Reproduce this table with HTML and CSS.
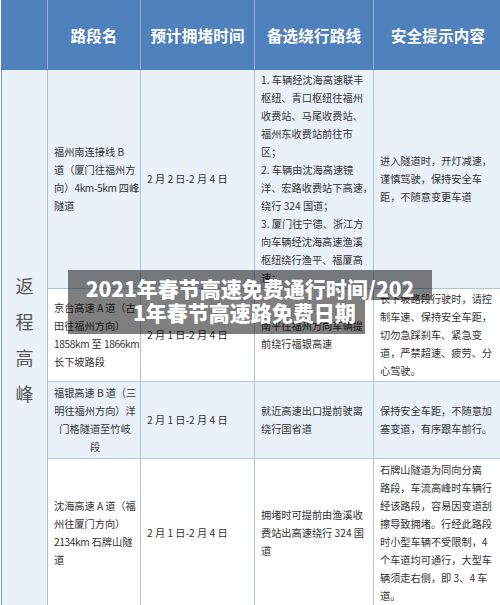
FILE: index.html
```html
<!DOCTYPE html>
<html lang="zh">
<head>
<meta charset="utf-8">
<link rel="stylesheet" href="styles.css">
</head>
<body>
<div class="page">
  <table class="grid">
    <colgroup>
      <col class="c1"><col class="c2"><col class="c3"><col class="c4"><col class="c5">
    </colgroup>
    <thead>
      <tr class="head">
        <th></th>
        <th>路段名</th>
        <th>预计拥堵时间</th>
        <th>备选绕行路线</th>
        <th>安全提示内容</th>
      </tr>
    </thead>
    <tbody>
      <tr class="r1 alt">
        <td class="side" rowspan="4">返<br>程<br>高<br>峰</td>
        <td>福州南连接线 <span class="lat">B</span><br>道（厦门往福州方<br>向）<span class="lat">4km-5km</span> 四峰<br>隧道</td>
        <td>2 月 2 日-2 月 4 日</td>
        <td>1. 车辆经沈海高速联丰<br>枢纽、青口枢纽往福州<br>收费站、马尾收费站、<br>福州东收费站前往市<br>区；<br>2. 车辆由沈海高速镜<br>洋、宏路收费站下高速，<br>绕行 324 国道；<br>3. 厦门往宁德、浙江方<br>向车辆经沈海高速渔溪<br>枢纽绕行渔平、福厦高<br>速；</td>
        <td>进入隧道时，开灯减速，<br>谨慎驾驶，保持安全车<br>距，不随意变更车道</td>
      </tr>
      <tr class="r2">
        <td>京台高速 <span class="lat">A</span> 道（古<br>田往福州方向）<br><span class="lat">1858km</span> 至 <span class="lat">1866km</span><br>长下坡路段</td>
        <td>2 月 1 日-2 月 4 日</td>
        <td>南平往福州方向车辆提<br>前绕行福银高速</td>
        <td>长下坡路段行驶时，请控<br>制车速、保持安全车距，<br>切勿急踩刹车、紧急变<br>道，严禁超速、疲劳、分<br>心驾驶。</td>
      </tr>
      <tr class="r3 alt">
        <td class="center">福银高速 <span class="lat">B</span> 道（三<br>明往福州方向）洋<br>门格隧道至竹岐<br>段</td>
        <td>2 月 1 日-2 月 4 日</td>
        <td>就近高速出口提前驶离<br>绕行国省道</td>
        <td>保持安全车距，不随意加<br>塞变道，有序跟车前行。</td>
      </tr>
      <tr class="r4">
        <td>沈海高速 <span class="lat">A</span> 道（福<br>州往厦门方向）<br><span class="lat">2134km</span> 石牌山隧<br>道</td>
        <td>2 月 1 日-2 月 4 日</td>
        <td>拥堵时可提前由渔溪收<br>费站出高速绕行 324 国<br>道</td>
        <td>石牌山隧道为同向分离<br>路段，车流高峰时车辆行<br>经该路段，容易因变道刮<br>擦导致拥堵。行经此路段<br>时小型车辆不受限制，4<br>个车道均可通行，大型车<br>辆须走右侧，即 3、4 车<br>道。</td>
      </tr>
    </tbody>
  </table>
  <div class="caption">
    <div class="cap-line first">2021年春节高速免费通行时间/202</div>
    <div class="cap-line second">1年春节高速路免费日期</div>
  </div>
</div>
</body>
</html>
```
FILE: styles.css
```css
html, body {
  margin: 0;
  padding: 0;
  background: #ffffff;
}
body {
  width: 500px;
  height: 605px;
  overflow: hidden;
  font-family: "Noto Sans CJK SC", "Liberation Sans", sans-serif;
}
.page {
  position: relative;
  width: 500px;
  height: 605px;
  overflow: hidden;
}
.grid {
  border-collapse: collapse;
  table-layout: fixed;
  width: 501px;
  margin-left: 1px;
}
.c1 { width: 46px; }
.c2 { width: 93px; }
.c3 { width: 114px; }
.c4 { width: 119px; }
.c5 { width: 129px; }

.head th {
  height: 69px;
  padding: 0;
  background: #4f81bd;
  color: #ffffff;
  font-size: 15.5px;
  font-weight: 700;
  text-align: center;
  vertical-align: middle;
  border-left: 1px solid #8eb0da;
  border-right: 1px solid #8eb0da;
  border-bottom: 1px solid #4f81bd;
  white-space: nowrap;
  letter-spacing: 0.2px;
}
.head th:first-child {
  border-left: 1px solid #4f81bd;
}
tbody td {
  border: 1px solid #abc4e4;
  padding: 1px 4px 1px 6px;
  font-size: 10.2px;
  line-height: 18px;
  color: #333333;
  vertical-align: middle;
  white-space: nowrap;
  background: #ffffff;
  text-align: left;
}
.lat {
  letter-spacing: -0.4px;
}
tbody tr.alt td {
  background: #ebf1f9;
}
tbody td.side {
  background: #ebf1f9;
  border-left: 1px solid #7098cb;
  text-align: center;
  font-size: 18px;
  line-height: 36px;
  color: #555555;
  padding: 0;
}
tbody td.center {
  text-align: center;
}
.r1 td { height: 216px; }
.r2 td { height: 90px; }
.r3 td { height: 74px; }
.r4 td { height: 146px; }

.caption {
  position: absolute;
  left: 68px;
  top: 270px;
  width: 364px;
  color: #ffffff;
  font-size: 21px;
  font-weight: 900;
  line-height: 24px;
  white-space: nowrap;
}
.cap-line {
  background: rgba(0, 0, 0, 0.5);
}
.cap-line.first {
  padding-top: 6px;
  text-align: center;
  width: 364px;
}
.cap-line.second {
  width: 232px;
  padding-left: 65px;
  padding-bottom: 10px;
}
```
